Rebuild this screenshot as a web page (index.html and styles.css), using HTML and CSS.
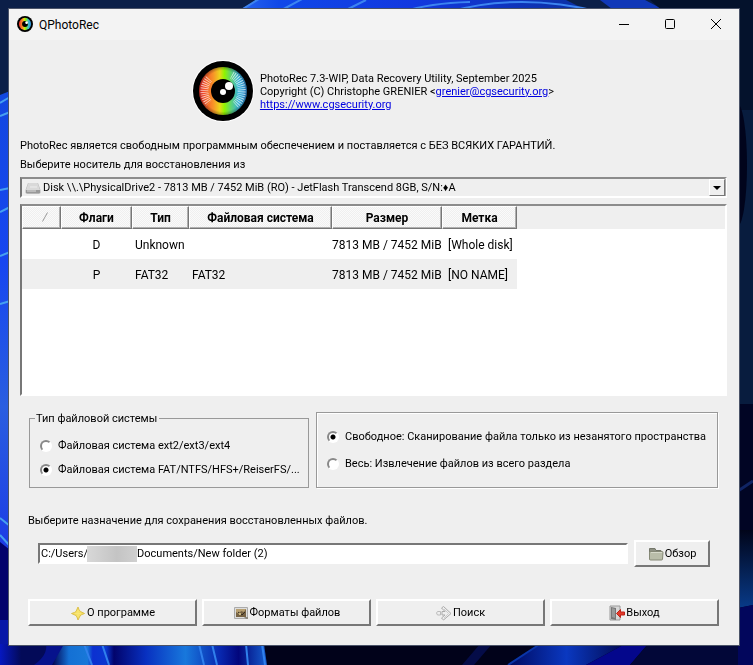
FILE: index.html
```html
<!DOCTYPE html>
<html lang="ru">
<head>
<meta charset="utf-8">
<meta name="viewport" content="width=device-width, initial-scale=1">
<title>QPhotoRec</title>
<link rel="stylesheet" href="styles.css">
</head>
<body>
<svg class="wallpaper" viewBox="0 0 753 665" preserveAspectRatio="none" aria-hidden="true">
  <defs>
    <linearGradient id="topBlue"><stop offset="0" stop-color="#2a68ee"/><stop offset=".12" stop-color="#1048e8"/><stop offset=".5" stop-color="#1238e0"/><stop offset="1" stop-color="#0b30a0"/></linearGradient>
    <linearGradient id="leftBlue" x1="0" y1="0" x2="0" y2="1"><stop offset="0" stop-color="#1248e0"/><stop offset=".3" stop-color="#1746f0"/><stop offset=".55" stop-color="#2a5ee0"/><stop offset=".8" stop-color="#1c3ce6"/><stop offset="1" stop-color="#0c20b0"/></linearGradient>
    <linearGradient id="bottomBlue" gradientUnits="userSpaceOnUse" x1="0" y1="0" x2="265" y2="0"><stop offset="0" stop-color="#0618c0"/><stop offset=".08" stop-color="#030a58"/><stop offset=".2" stop-color="#030a58"/><stop offset=".26" stop-color="#1470d4"/><stop offset=".33" stop-color="#1878d8"/><stop offset=".35" stop-color="#0c30d0"/><stop offset=".4" stop-color="#0a38d0"/><stop offset=".43" stop-color="#02046c"/><stop offset=".55" stop-color="#0830c0"/><stop offset=".7" stop-color="#1878dc"/><stop offset=".83" stop-color="#0828b0"/><stop offset=".9" stop-color="#02067c"/><stop offset="1" stop-color="#1458c8"/></linearGradient>
    <linearGradient id="streak"><stop offset="0" stop-color="#000a60"/><stop offset=".5" stop-color="#0a38c0"/><stop offset="1" stop-color="#020a50"/></linearGradient>
    <linearGradient id="rightGlow" x1="0" y1="0" x2="0" y2="1"><stop offset="0" stop-color="#01051a"/><stop offset="1" stop-color="#083a88"/></linearGradient>
  </defs>
  <rect width="753" height="665" fill="#0b1f48"/>
  <path d="M236 12 262 -3H560L590 12Z" fill="url(#topBlue)"/>
  <path d="M238 12 262 -3M278 12 304 -2M342 12 366 0M402 12Q430 3 470 2M448 12Q520-8 600 12" fill="none" stroke="#3c84f0" stroke-width="2"/>
  <path d="M600 0H645L668 12H616Z" fill="#1038b8"/>
  <path d="M650 0H753V320H730V12H664Z" fill="#04122c"/>
  <rect x="738" y="110" width="15" height="294" fill="#081c3e"/>
  <ellipse cx="737" cy="165" rx="10" ry="62" fill="#01041c"/>
  <path d="M0 95 10 91V665H0Z" fill="url(#leftBlue)"/>
  <path d="M0 103 10 97M0 116 10 112M0 190 10 188M0 212 10 207M0 256 10 252M0 304 10 301M0 518 10 526M0 535 10 546" fill="none" stroke="#46a0f0" stroke-width="2"/>
  <path d="M0 542 10 550V622H0Z" fill="#02036c"/>
  <rect y="620" width="10" height="45" fill="#0718a8"/>
  <rect y="644" width="270" height="21" fill="url(#bottomBlue)"/>
  <path d="M58 644 64 644 52 665H34Q48 655 46 644Z" fill="#06128c"/>
  <path d="M84 644 92 665M102 644 109 665M199 644 204 665M212 644 217 665M246 644 248 665M262 644 265 665" fill="none" stroke="#3080ec" stroke-width="2"/>
  <path d="M264 644 267 665H753V644Z" fill="#01021a"/>
  <path d="M462 665 480 644H492L474 665Z" fill="#050c48"/>
  <path d="M508 665 540 644H625L586 665Z" fill="url(#streak)"/>
  <path d="M508 665 540 644" fill="none" stroke="#0a35a8" stroke-width="2"/>
  <path d="M586 665 625 644H648L630 665Z" fill="#04078c"/>
  <path d="M630 665 648 644H753V665Z" fill="#020738"/>
  <path d="M738 404H753V610H738Z" fill="#010524"/>
  <path d="M738 491 753 481" stroke="#102464" stroke-width="3"/>
  <path d="M738 530H753V605L738 608Z" fill="url(#rightGlow)"/>
  <path d="M738 608 753 605V665H738Z" fill="#02065c"/>
</svg>

<main class="window">
  <header class="titlebar">
    <svg class="title-icon" viewBox="0 0 60 60" aria-hidden="true"><circle cx="30" cy="30" r="30"/><circle cx="30" cy="30" r="23" fill="url(#iris)"/><circle cx="30" cy="30" r="11"/><circle cx="36" cy="25" r="5" fill="#fff"/></svg>
    <h1 class="title">QPhotoRec</h1>
    <div class="caption-buttons">
      <button type="button" aria-label="Свернуть"><svg viewBox="0 0 12 12"><path d="M1 6.5H11"/></svg></button>
      <button type="button" aria-label="Развернуть"><svg viewBox="0 0 12 12"><rect x="1.500" y="1.500" width="9" height="9" rx="1"/></svg></button>
      <button type="button" aria-label="Закрыть"><svg viewBox="0 0 12 12"><path d="M1 1 11 11M11 1 1 11"/></svg></button>
    </div>
  </header>

  <div class="content">
    <section class="about">
      <svg class="logo" viewBox="0 0 60 60" aria-hidden="true">
        <defs>
          <linearGradient id="iris"><stop offset=".05" stop-color="#f03c2c"/><stop offset=".3" stop-color="#f89428"/><stop offset=".43" stop-color="#ecd41c"/><stop offset=".53" stop-color="#90f400"/><stop offset=".66" stop-color="#60d470"/><stop offset=".82" stop-color="#38b4d8"/><stop offset="1" stop-color="#3088d0"/></linearGradient>
          <radialGradient id="shade"><stop offset=".85" stop-color="#000" stop-opacity="0"/><stop offset="1" stop-color="#000" stop-opacity=".3"/></radialGradient>
        </defs>
        <circle cx="30" cy="30" r="31" fill="#fff"/>
        <circle cx="30" cy="30" r="30"/>
        <circle cx="30" cy="30" r="24" fill="url(#iris)"/>
        <circle cx="30" cy="30" r="24" fill="url(#shade)"/>
        <g fill="none" stroke="#fff" stroke-opacity=".7" stroke-width="8" stroke-dasharray=".8 1.200">
          <path d="M16 18A18 18 0 0 0 16 42M39 14A18 18 0 0 1 42 44"/>
        </g>
        <circle cx="30" cy="30" r="12"/>
        <circle cx="36" cy="25" r="4" fill="#fff"/>
        <circle cx="30" cy="31" r="3" fill="#fff"/>
      </svg>
      <p>PhotoRec 7.3-WIP, Data Recovery Utility, September 2025<br>Copyright (C) Christophe GRENIER &lt;<a href="mailto:grenier@cgsecurity.org">grenier@cgsecurity.org</a>&gt;<br><a href="https://www.cgsecurity.org">https://www.cgsecurity.org</a></p>
    </section>

    <p class="notice">PhotoRec является свободным программным обеспечением и поставляется с БЕЗ ВСЯКИХ ГАРАНТИЙ.</p>
    <label class="notice" for="disk">Выберите носитель для восстановления из</label>

    <div class="combo">
      <svg class="icon" viewBox="0 0 16 16" aria-hidden="true"><path d="M3 3H13L15.500 10V13L14 14H2L.5 13V10Z" fill="#b8b8b8"/><path d="M3.500 3H12.500L15 10H1Z" fill="#d9d9d9"/><path d="M1 10H15V13H1Z" fill="#999"/><path d="M2 11H11" stroke="#ddd"/><path d="M5 7H12" stroke="#eee"/></svg>
      <select id="disk"><option>Disk \\.\PhysicalDrive2 - 7813 MB / 7452 MiB (RO) - JetFlash Transcend 8GB, S/N:♦A</option></select>
      <span class="combo-arrow" aria-hidden="true"></span>
    </div>

    <div class="table-view">
      <table>
        <colgroup><col class="c-sort"><col class="c-flags"><col class="c-type"><col class="c-fs"><col class="c-size"><col class="c-label"></colgroup>
        <thead><tr><th class="sort" scope="col"><svg viewBox="0 0 6 10" aria-label="Сортировка"><path d="M.5 9.500 5.500 .5"/></svg></th><th scope="col">Флаги</th><th scope="col">Тип</th><th scope="col">Файловая система</th><th scope="col">Размер</th><th scope="col">Метка</th></tr></thead>
        <tbody>
          <tr><td></td><td class="center">D</td><td>Unknown</td><td></td><td class="right">7813 MB / 7452 MiB</td><td>[Whole disk]</td></tr>
          <tr><td></td><td class="center">P</td><td>FAT32</td><td>FAT32</td><td class="right">7813 MB / 7452 MiB</td><td>[NO NAME]</td></tr>
        </tbody>
      </table>
    </div>

    <div class="options">
      <fieldset class="fs-type">
        <legend>Тип файловой системы</legend>
        <label><input type="radio" name="fs"><span>Файловая система ext2/ext3/ext4</span></label>
        <label><input type="radio" name="fs" checked><span>Файловая система FAT/NTFS/HFS+/ReiserFS/...</span></label>
      </fieldset>
      <fieldset class="scan" aria-label="Область сканирования">
        <label><input type="radio" name="scan" checked><span>Свободное: Сканирование файла только из незанятого пространства</span></label>
        <label><input type="radio" name="scan"><span>Весь: Извлечение файлов из всего раздела</span></label>
      </fieldset>
    </div>

    <label class="dest-label" for="dest">Выберите назначение для сохранения восстановленных файлов.</label>
    <div class="dest">
      <div class="path">
        <input id="dest" type="text" value="C:/Users/&nbsp;&nbsp;&nbsp;&nbsp;&nbsp;&nbsp;&nbsp;&nbsp;&nbsp;&nbsp;&nbsp;&nbsp;&nbsp;&nbsp;&nbsp;&nbsp;&nbsp;&nbsp;Documents/New folder (2)">
        <span class="redaction" aria-hidden="true"></span>
      </div>
      <button class="push" type="button"><svg class="icon" viewBox="0 0 16 16" aria-hidden="true"><path d="M1.500 13V2.500H7L8 4.500H13V13Z" fill="#8d9082" stroke="#74776b"/><path d="M1.500 6.500Q1.500 5.500 3 5.500H14Q15 5.500 15 6.500L14.500 13Q14.500 14 13.500 14H2.500Q1.500 14 1.500 13Z" fill="#b9bda9" stroke="#858876"/><path d="M3 6.500H14" stroke="#d6d9ca"/></svg>Обзор</button>
    </div>

    <div class="actions">
      <button class="push" type="button"><svg class="icon" viewBox="0 0 16 16" aria-hidden="true"><path d="M8 2Q9 5.500 10.500 6.500L14.500 8.500Q11 9.500 10 11L8 15Q7 11.500 6 10.500L1.500 8.500Q5 7.500 6 6.500Z" fill="#f6e062" stroke="#dcc04c"/><path d="M8 5V12M5 8.500H11" stroke="#f8e678"/></svg>О программе</button>
      <button class="push" type="button"><svg class="icon" viewBox="0 0 16 16" aria-hidden="true"><path d="M1.500 2.500H14.500V13.500H1.500Z" fill="#ddd" stroke="#aaa"/><path d="M3 4H13V12H3Z" fill="#776344"/><path d="M3 4H13L11 7 8 6 6 9 3 7Z" fill="#b8a071"/><path d="M5 7 9 10 12 7" stroke="#342c22" fill="none"/><circle cx="7" cy="9" r="1" fill="#f0dd9c"/><path d="M11 12H15V14H13Z" fill="#8d8a80"/></svg>Форматы файлов</button>
      <button class="push" type="button"><svg class="icon" viewBox="0 0 16 16" aria-hidden="true"><path d="M6 6.500H9L5.500 3 7.500 1.500 15 8.500 7.500 15 5.500 13 9 10H6Z" fill="#eee" stroke="#aaa"/><path d="M1.500 6.500H4.500V10H1.500L.5 8Z" fill="#eee" stroke="#bbb"/><path d="M8 4 12.500 8.500 8 13" fill="none" stroke="#ccc"/></svg>Поиск</button>
      <button class="push" type="button"><svg class="icon" viewBox="0 0 16 16" aria-hidden="true"><path d="M1 1H11V15H1Z" fill="#d7d7d7" stroke="#999"/><path d="M2 2 7 3V15L2 14Z" fill="#777"/><path d="M3 3 6 4V13L3 12Z" fill="#999"/><path d="M7.500 8.500 11.500 4.500V7H15.500V10H11.500V12.500Z" fill="#e33a2a" stroke="#bd2318"/></svg>Выход</button>
    </div>
  </div>
</main>
</body>
</html>
```
FILE: styles.css
```css
* { box-sizing: border-box; }

body {
  margin: 0;
  min-height: 100vh;
  padding: 9px 14px 20px 9px;
  display: flex;
  background: #0b1f48;
  color: #000;
  font: 11px/13px Roboto, "Noto Sans", sans-serif;
}

button, input, select { font: inherit; color: inherit; margin: 0; }
p, h1 { margin: 0; }
a { color: #0000e0; }

.wallpaper { position: fixed; inset: 0; width: 100%; height: 100%; z-index: -1; }

.window {
  flex: 1;
  min-width: 0;
  display: flex;
  flex-direction: column;
  background: #efefef;
  box-shadow: 0 0 0 1px #4a5368;
}

.titlebar { display: flex; align-items: center; height: 31px; padding-left: 8px; background: #f3f3f3; }
.title-icon { width: 16px; height: 16px; margin: 0 6px 2px 0; }
.title { font-size: 12px; line-height: 16px; font-weight: 400; }
.caption-buttons { display: flex; margin-left: auto; align-self: stretch; }
.caption-buttons button { width: 46px; padding: 0 0 2px; border: 0; background: none; display: grid; place-items: center; }
.caption-buttons svg { width: 12px; height: 12px; fill: none; stroke: #000; }

.content { flex: 1; display: flex; flex-direction: column; padding: 20px 12px 19px 11px; }

.about { display: flex; justify-content: center; gap: 7px; height: 62px; align-items: center; margin-bottom: 14px; }
.logo { width: 60px; height: 60px; overflow: visible; }

.notice { display: block; line-height: 19px; }

.combo {
  display: flex;
  align-items: center;
  height: 21px;
  margin-top: 3px;
  padding-left: 3px;
  border: 2px solid;
  border-color: #8c8c8c #fff #fff #777;
}
.icon { width: 16px; height: 16px; flex: none; }
.combo select { appearance: none; flex: 1; min-width: 0; height: 17px; border: 0; padding: 0 2px; background: none; }
.combo-arrow {
  width: 16px;
  height: 17px;
  display: grid;
  place-items: center;
  border: 1px solid;
  border-color: #fff #777 #777 #fff;
  box-shadow: 1px 0 #aaa;
  pointer-events: none;
}
.combo-arrow::before { content: ""; border: 4px solid transparent; border-top-color: #000; border-bottom: 0; }

.table-view {
  flex: 1;
  min-height: 120px;
  margin-top: 6px;
  border: 2px solid;
  border-color: #8c8c8c #fff #fff #777;
  background: linear-gradient(#efefef 23px, #fff 23px);
  font-size: 12px;
  line-height: 16px;
}
table { border-collapse: separate; border-spacing: 0; table-layout: fixed; width: 495px; }
.c-sort { width: 39px; }
.c-flags { width: 71px; }
.c-type { width: 57px; }
.c-fs { width: 143px; }
.c-size { width: 110px; }
.c-label { width: 75px; }
th {
  height: 23px;
  padding: 0;
  font-weight: 700;
  border: 1px solid;
  border-color: #fff #777 #777 #fff;
  box-shadow: inset -1px -1px #b0b0b0;
  background: repeating-conic-gradient(#efefef 0 25%, #fafafa 0 50%) 0 0 / 2px 2px;
}
.sort { text-align: right; padding-right: 12px; }
.sort svg { width: 6px; height: 10px; fill: none; stroke: #999; }
td { height: 30px; padding: 2px 0 0 3px; white-space: nowrap; }
td:last-child { padding-left: 6px; }
td.center { text-align: center; padding-left: 0; }
td.right { text-align: right; padding-right: 2px; padding-left: 0; }
tbody tr:nth-child(even) { background: #efefef; }

.options { display: grid; grid-template-columns: 280fr 402fr; align-items: end; gap: 7px; margin: 16px 9px 0; }
fieldset {
  min-width: 0;
  margin: 0;
  border: 1px solid #999;
  box-shadow: 1px 1px #fff, inset 1px 1px #fff;
  display: flex;
  flex-direction: column;
}
.fs-type { height: 76px; padding: 14px 10px 0; gap: 11px; box-shadow: none; }
.scan { height: 76px; padding: 17px 10px 0; gap: 14px; }
legend { padding: 0 2px 0 1px; margin-left: -5px; }
fieldset label { display: flex; align-items: center; gap: 6px; white-space: nowrap; }
input[type="radio"] {
  appearance: none;
  width: 12px;
  height: 12px;
  flex: none;
  border: 2px solid;
  border-color: #888 #fff #fff #888;
  border-radius: 50%;
  background: #fff;
}
input[type="radio"]:checked { background: radial-gradient(circle, #000 2px, #fff 3px); }

.dest-label { margin: 26px 8px 0; }
.dest { display: flex; align-items: center; gap: 6px; margin: 13px 17px 0 18px; }
.path { position: relative; flex: 1; }
.path input { display: block; width: 100%; height: 21px; padding: 0 1px; border: 2px solid; border-color: #777 #fff #fff #777; background: #fff; }
.redaction { position: absolute; left: 49px; top: 3px; width: 50px; height: 16px; background: linear-gradient(90deg, #d8d8d8, #c4c4c4 60%, #d0d0d0); }

.push {
  display: flex;
  align-items: center;
  justify-content: center;
  gap: 1px;
  height: 27px;
  padding: 0;
  border: 2px solid;
  border-color: #fff #777 #777 #fff;
  background: #efefef;
}
.dest .push { width: 76px; }
.actions { display: grid; grid-template-columns: repeat(4, 1fr); gap: 5px; margin: 32px 8px 0; }
```
